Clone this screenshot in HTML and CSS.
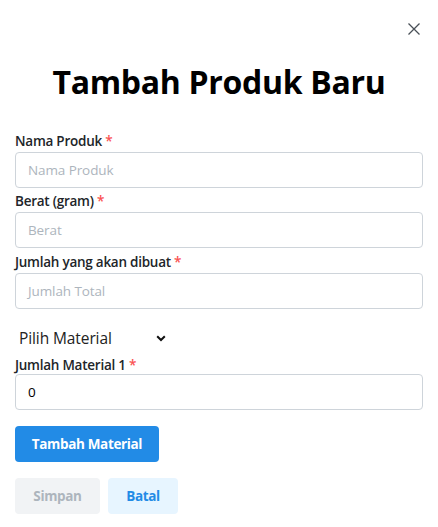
FILE: index.html
```html
<!DOCTYPE html>
<html lang="id">
<head>
<meta charset="utf-8">
<title>Tambah Produk Baru</title>
<link rel="stylesheet" href="styles.css">
</head>
<body>
<div class="modal">
  <button class="close" aria-label="Tutup">
    <svg width="12" height="12" viewBox="0 0 12 12"><path d="M0.5 0.5 L11.5 11.5 M11.5 0.5 L0.5 11.5" stroke="#495057" stroke-width="1.3" fill="none"/></svg>
  </button>
  <h1 class="title">Tambah Produk Baru</h1>
  <form class="form">
    <div class="field">
      <label class="label">Nama Produk <span class="req">*</span></label>
      <div class="input placeholder">Nama Produk</div>
    </div>
    <div class="field">
      <label class="label">Berat (gram) <span class="req">*</span></label>
      <div class="input placeholder">Berat</div>
    </div>
    <div class="field field-third">
      <label class="label">Jumlah yang akan dibuat <span class="req">*</span></label>
      <div class="input placeholder">Jumlah Total</div>
    </div>
    <div class="select">
      <span class="select-text">Pilih Material</span>
      <svg class="chev" width="10" height="7" viewBox="0 0 10 7"><path d="M1.2 1.2 L5 5 L8.8 1.2" stroke="#111" stroke-width="2" fill="none"/></svg>
    </div>
    <div class="field field-tight">
      <label class="label label-tight">Jumlah Material 1 <span class="req">*</span></label>
      <div class="input value">0</div>
    </div>
    <div class="btn btn-primary">Tambah Material</div>
    <div class="actions">
      <div class="btn btn-disabled">Simpan</div>
      <div class="btn btn-light">Batal</div>
    </div>
  </form>
</div>
</body>
</html>
```

FILE: styles.css
```css
* { box-sizing: border-box; }
html, body { margin: 0; padding: 0; background: #fff; }
body {
  font-family: "Open Sans", "Noto Sans", "Liberation Sans", sans-serif;
  color: #000;
}
.modal {
  position: relative;
  padding: 60px 15px 13px;
}
.close {
  position: absolute;
  top: 17px;
  left: 402px;
  width: 24px;
  height: 24px;
  border: 0;
  background: transparent;
  padding: 0;
  display: flex;
  align-items: center;
  justify-content: center;
}
.title {
  margin: 0;
  font-size: 32px;
  line-height: 44px;
  height: 44px;
  font-weight: 700;
  text-align: center;
  letter-spacing: -0.3px;
  color: #000;
}
.form {
  margin-top: 26px;
  display: flex;
  flex-direction: column;
}
.field {
  display: flex;
  flex-direction: column;
  margin-bottom: 2px;
}
.field-third { margin-top: 1px; }
.label {
  font-size: 13.5px;
  font-weight: 600;
  letter-spacing: -0.25px;
  line-height: 22px;
  height: 22px;
  color: #212529;
  white-space: nowrap;
}
.req { color: #fa5252; }
.input {
  height: 36px;
  border: 1px solid #ced4da;
  border-radius: 4px;
  padding: 0 12px;
  font-size: 13.5px;
  letter-spacing: -0.1px;
  display: flex;
  align-items: center;
}
.placeholder { color: #adb5bd; }
.value { color: #000; }
.select {
  margin-top: 11px;
  height: 32px;
  display: flex;
  align-items: center;
  padding-left: 4px;
}
.select-text {
  font-size: 15.5px;
  color: #222;
  width: 137px;
  letter-spacing: -0.1px;
}
.chev { display: block; }
.field-tight { margin-top: 2px; }
.label-tight { height: 18px; line-height: 18px; }
.btn {
  height: 36px;
  border-radius: 4px;
  padding: 0;
  font-size: 13.5px;
  font-weight: 700;
  letter-spacing: -0.35px;
  white-space: nowrap;
  display: inline-flex;
  align-items: center;
  justify-content: center;
  align-self: flex-start;
}
.btn-primary {
  margin-top: 14px;
  background: #228be6;
  color: #fff;
  width: 144px;
}
.actions {
  margin-top: 16px;
  display: flex;
  gap: 8px;
}
.btn-disabled {
  background: #f1f3f5;
  color: #adb5bd;
  width: 85px;
}
.btn-light {
  background: #e7f5ff;
  color: #228be6;
  width: 70px;
}
```
